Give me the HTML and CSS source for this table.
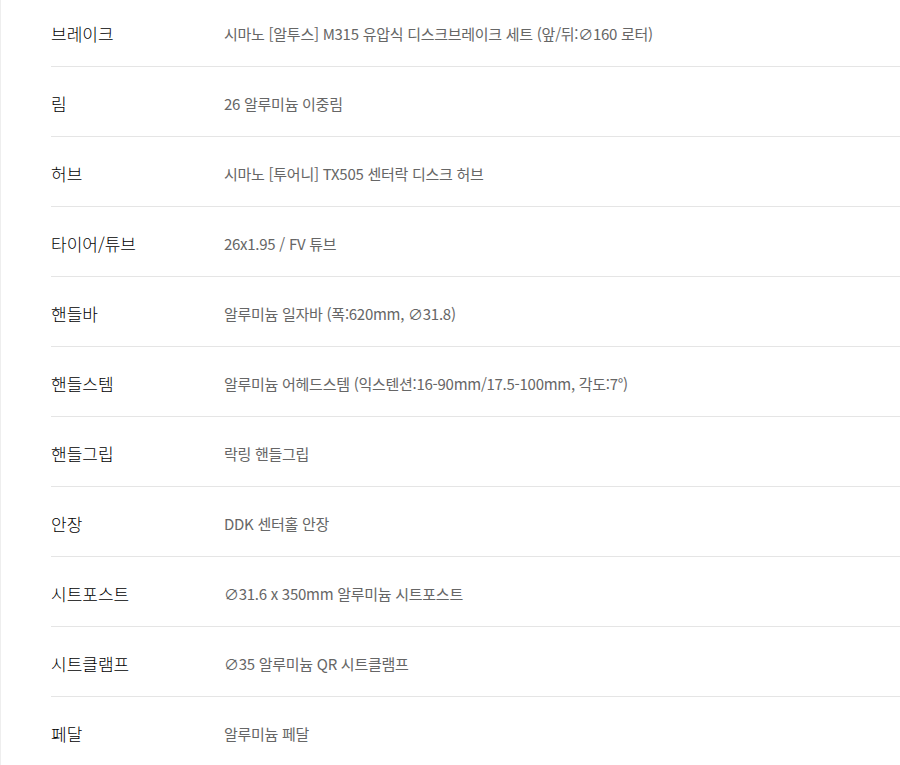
FILE: index.html
```html
<!DOCTYPE html>
<html lang="ko">
<head>
<meta charset="utf-8">
<link rel="stylesheet" href="styles.css">
</head>
<body>
<div class="page">
  <dl class="spec">
    <div class="row"><dt>브레이크</dt><dd>시마노 [알투스] M315 유압식 디스크브레이크 세트 (앞/뒤:∅160 로터)</dd></div>
    <div class="row"><dt>림</dt><dd>26 알루미늄 이중림</dd></div>
    <div class="row"><dt>허브</dt><dd>시마노 [투어니] TX505 센터락 디스크 허브</dd></div>
    <div class="row"><dt>타이어/튜브</dt><dd>26x1.95 / FV 튜브</dd></div>
    <div class="row"><dt>핸들바</dt><dd>알루미늄 일자바 (폭:620mm, ∅31.8)</dd></div>
    <div class="row"><dt>핸들스템</dt><dd>알루미늄 어헤드스템 (익스텐션:16-90mm/17.5-100mm, 각도:7°)</dd></div>
    <div class="row"><dt>핸들그립</dt><dd>락링 핸들그립</dd></div>
    <div class="row"><dt>안장</dt><dd>DDK 센터홀 안장</dd></div>
    <div class="row"><dt>시트포스트</dt><dd>∅31.6 x 350mm 알루미늄 시트포스트</dd></div>
    <div class="row"><dt>시트클램프</dt><dd>∅35 알루미늄 QR 시트클램프</dd></div>
    <div class="row last"><dt>페달</dt><dd>알루미늄 페달</dd></div>
  </dl>
</div>
</body>
</html>
```

FILE: styles.css
```css
html, body {
  margin: 0;
  padding: 0;
  background: #fff;
}
body {
  font-family: "Noto Sans CJK KR", "Noto Sans", sans-serif;
}
.page {
  border-left: 1px solid #eeeeee;
  padding-left: 50px;
  min-height: 765px;
  box-sizing: border-box;
}
.spec {
  margin: -3px 0 0 0;
}
.row {
  display: grid;
  grid-template-columns: 173px 1fr;
  align-items: center;
  border-bottom: 1px solid #e5e5e5;
  padding-top: 3px;
  height: 66px;
}
.row.last {
  border-bottom: none;
}
.row dt {
  font-size: 17px;
  font-weight: 300;
  color: #000;
  margin: 0;
}
.row dd {
  font-size: 15px;
  font-weight: 400;
  letter-spacing: -0.27px;
  color: #666;
  margin: 0;
}
```
